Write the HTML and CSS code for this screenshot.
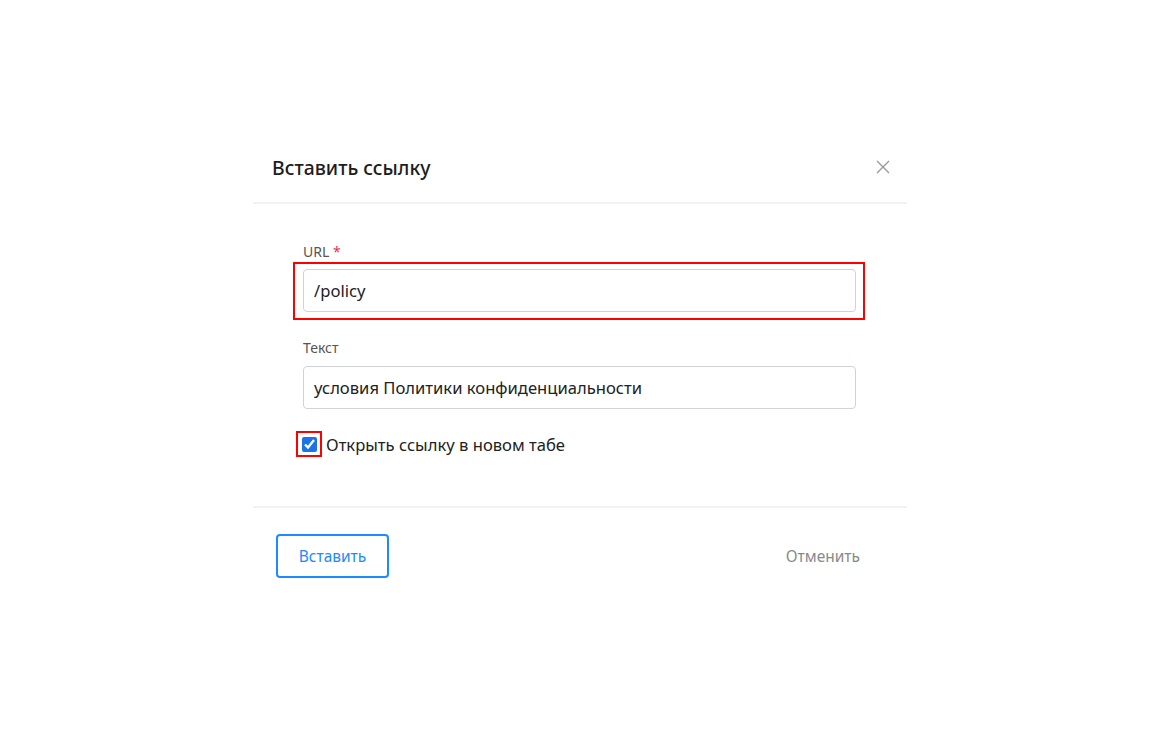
FILE: index.html
```html
<!DOCTYPE html>
<html lang="ru">
<head>
    <meta charset="UTF-8">
    <meta name="viewport" content="width=device-width, initial-scale=1.0">
    <title>Вставить ссылку</title>
    <link rel="stylesheet" href="styles.css">
</head>
<body>
    <div class="modal">
        <div class="modal-header">
            <h2>Вставить ссылку</h2>
            <button class="close" type="button" aria-label="Закрыть">
                <svg width="14" height="14" viewBox="0 0 14 14">
                    <path d="M1 1 L13 13 M13 1 L1 13" stroke="#9a9a9a" stroke-width="1.4" fill="none"/>
                </svg>
            </button>
        </div>

        <form class="modal-body">
            <label class="field-label" for="url">URL <span class="req">*</span></label>
            <div class="highlight">
                <input type="text" id="url" value="/policy">
            </div>

            <label class="field-label" for="text">Текст</label>
            <div class="plain">
                <input type="text" id="text" value="условия Политики конфиденциальности">
            </div>

            <div class="check-row">
                <span class="check-box"><input type="checkbox" id="newtab" checked></span>
                <label for="newtab">Открыть ссылку в новом табе</label>
            </div>
        </form>

        <div class="modal-footer">
            <button class="btn-insert" type="button">Вставить</button>
            <button class="btn-cancel" type="button">Отменить</button>
        </div>
    </div>
</body>
</html>
```

FILE: styles.css
```css
body {
    margin: 0;
    padding: 0;
    background: #fff;
    font-family: "Noto Sans", "Open Sans", sans-serif;
    color: #222;
}

.modal {
    width: 654px;
    margin: 140px 0 0 253px;
}

.modal-header {
    display: flex;
    justify-content: space-between;
    align-items: center;
    padding: 14px 17px 20px 19px;
    border-bottom: 2px solid #f2f2f2;
}

.modal-header h2 {
    margin: 0;
    font-size: 19.4px;
    line-height: 28px;
    font-weight: 500;
    color: #1d1d1d;
}

.close {
    background: none;
    border: none;
    padding: 0;
    cursor: pointer;
    display: flex;
    margin-bottom: 2px;
}

.modal-body {
    padding: 38px 42px 49px 40px;
    display: flex;
    flex-direction: column;
}

.field-label {
    font-size: 14px;
    color: #555;
    margin-left: 10px;
    line-height: 20px;
}

.req {
    color: #e8305c;
}

.highlight {
    border: 2px solid #f00;
    padding: 5px 7px 6px 8px;
    margin: 0 0 18px 0;
}

.plain {
    padding: 0 9px 0 10px;
    margin: 8px 0 22px 0;
}

input[type="text"] {
    box-sizing: border-box;
    width: 100%;
    height: 43px;
    border: 1px solid #cfd3d9;
    border-radius: 4px;
    padding: 0 10px;
    font-family: inherit;
    font-size: 16.6px;
    color: #222;
    background: #fff;
}

.check-row {
    display: flex;
    align-items: center;
    margin-left: 3px;
    font-size: 16.6px;
}

.check-box {
    display: inline-flex;
    border: 2px solid #f00;
    width: 26px;
    height: 26px;
    box-sizing: border-box;
    align-items: center;
    justify-content: center;
    margin-right: 4px;
}

.check-box input {
    margin: 0;
    width: 15px;
    height: 15px;
    accent-color: #1a73e8;
}

.modal-footer {
    border-top: 2px solid #f2f2f2;
    display: flex;
    justify-content: space-between;
    align-items: center;
    padding: 26px 47px 0 23px;
}

.btn-insert {
    width: 113px;
    height: 44px;
    border: 2px solid #1a8cff;
    border-radius: 4px;
    background: #fff;
    color: #1a8cff;
    font-family: inherit;
    font-size: 15.5px;
    cursor: pointer;
}

.btn-cancel {
    background: none;
    border: none;
    padding: 0;
    color: #8a8a8a;
    font-family: inherit;
    font-size: 15.5px;
    cursor: pointer;
}
```
